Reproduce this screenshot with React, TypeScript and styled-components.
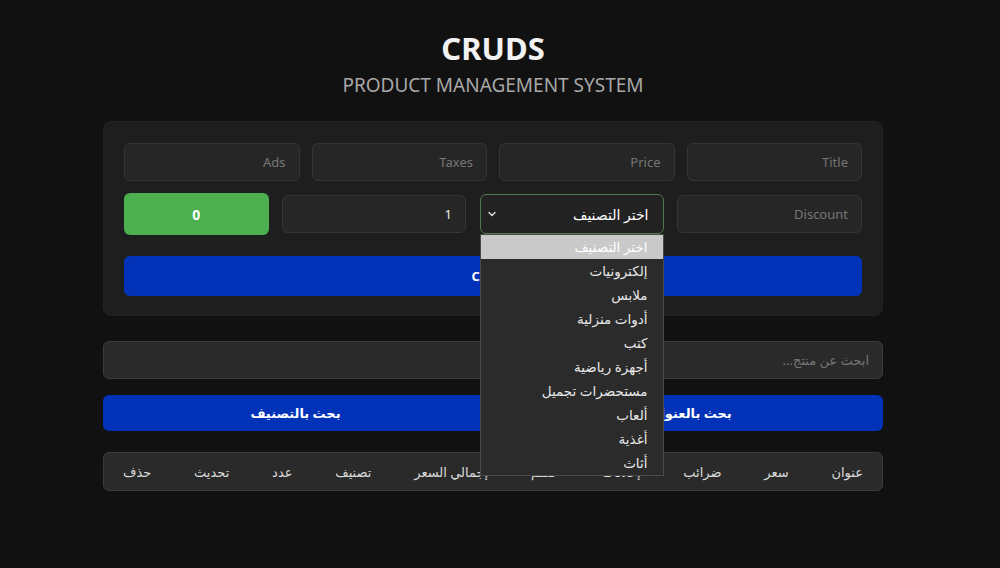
import React from 'react';
import styled, { createGlobalStyle } from 'styled-components';

const GlobalStyle = createGlobalStyle`
  html, body {
    margin: 0;
    padding: 0;
    background: #111111;
  }
  body {
    font-family: 'Noto Sans', 'DejaVu Sans', sans-serif;
    color: #eeeeee;
  }
`;

const Page = styled.div`
  padding: 30px 14px 40px 0;
  min-height: 568px;
  box-sizing: border-box;
`;

const Main = styled.div`
  width: 780px;
  margin: 0 auto;
`;

const Header = styled.header`
  text-align: center;
  margin-bottom: 23px;
`;

const Title = styled.h1`
  margin: 0;
  font-size: 31px;
  font-weight: 700;
  line-height: 36px;
  color: #f2f2f2;
`;

const Subtitle = styled.p`
  margin: 6px 0 0;
  font-size: 19px;
  line-height: 26px;
  color: #a8a8a8;
  font-weight: 400;
`;

const Card = styled.div`
  background: #1e1e1e;
  border: 1px solid #222;
  border-radius: 8px;
  padding: 21px 20px 19px;
  display: flex;
  flex-direction: column;
  gap: 12px;
`;

const Row = styled.div<{ $cols: string; $gap: number }>`
  display: grid;
  direction: rtl;
  grid-template-columns: ${(p) => p.$cols};
  gap: ${(p) => p.$gap}px;
  align-items: center;
`;

const Input = styled.input`
  box-sizing: border-box;
  height: 38px;
  width: 100%;
  background: #262626;
  border: 1px solid #353535;
  border-radius: 6px;
  padding: 0 13px;
  color: #eee;
  font-family: inherit;
  font-size: 13px;
  text-align: right;
  direction: ltr;
  outline: none;

  &::placeholder {
    color: #767676;
  }
`;

const Total = styled.div`
  height: 42px;
  border-radius: 6px;
  background: #4caf50;
  color: #fff;
  font-weight: 700;
  font-size: 14px;
  display: flex;
  align-items: center;
  justify-content: center;
`;

const SelectWrap = styled.div`
  position: relative;
`;

const SelectBox = styled.div`
  box-sizing: border-box;
  height: 40px;
  background: #222;
  border: 1px solid #4d7a4f;
  border-radius: 6px;
  display: flex;
  align-items: center;
  justify-content: space-between;
  padding: 0 14px 0 6px;
  font-size: 14px;
  font-weight: 400;
  color: #ffffff;
`;

const Options = styled.ul`
  position: absolute;
  top: 40px;
  left: 0;
  right: 0;
  margin: 0;
  padding: 0;
  list-style: none;
  background: #2b2b2b;
  border: 1px solid #4a4a4a;
  z-index: 10;
`;

const Option = styled.li<{ $active?: boolean }>`
  height: 24px;
  line-height: 24px;
  padding-right: 15px;
  font-size: 13.5px;
  color: ${(p) => (p.$active ? '#fff' : '#e8e8e8')};
  background: ${(p) => (p.$active ? '#c9c9c9' : 'transparent')};
`;

const BlueButton = styled.button`
  appearance: none;
  border: none;
  background: #0132b8;
  color: #fff;
  font-family: inherit;
  font-weight: 700;
  font-size: 13px;
  border-radius: 6px;
  width: 100%;
`;

const CreateButton = styled(BlueButton)`
  height: 40px;
  margin-top: 9px;
`;

const Search = styled(Input)`
  margin-top: 25px;
  height: 38px;
  background: #2a2a2a;
  border-color: #3b3b3b;
  direction: rtl;
  padding: 0 13px;
`;

const SearchButtons = styled.div`
  display: grid;
  grid-template-columns: 1fr 1fr;
  gap: 10px;
  margin-top: 16px;
  direction: rtl;

  & > button {
    height: 36px;
  }
`;

const Table = styled.div`
  margin-top: 21px;
  box-sizing: border-box;
  height: 39px;
  background: #2a2a2a;
  border: 1px solid #3a3a3a;
  border-radius: 6px;
  display: flex;
  direction: rtl;
  align-items: center;
  justify-content: space-between;
  padding: 0 19px;
`;

const Th = styled.span`
  font-size: 13px;
  color: #dcdcdc;
  white-space: nowrap;
`;

const categories = [
  'اختر التصنيف',
  'إلكترونيات',
  'ملابس',
  'أدوات منزلية',
  'كتب',
  'أجهزة رياضية',
  'مستحضرات تجميل',
  'ألعاب',
  'أغذية',
  'أثاث',
];

const columns = [
  'عنوان',
  'سعر',
  'ضرائب',
  'إعلانات',
  'خصم',
  'إجمالي السعر',
  'تصنيف',
  'عدد',
  'تحديث',
  'حذف',
];

const Chevron = () => (
  <svg width="10" height="10" viewBox="0 0 10 10" fill="none">
    <path d="M2 3.5 5 6.5 8 3.5" stroke="#e0e0e0" strokeWidth="1.4" strokeLinecap="round" strokeLinejoin="round" />
  </svg>
);

const App = () => {
  return (
    <Page>
      <GlobalStyle />
      <Main>
        <Header>
          <Title>CRUDS</Title>
          <Subtitle>PRODUCT MANAGEMENT SYSTEM</Subtitle>
        </Header>

        <Card>
          <Row $cols="1fr 1fr 1fr 1fr" $gap={12}>
            <Input placeholder="Title" />
            <Input placeholder="Price" />
            <Input placeholder="Taxes" />
            <Input placeholder="Ads" />
          </Row>
          <Row $cols="185px 184px 184px 1fr" $gap={13.5}>
            <Input placeholder="Discount" />
            <SelectWrap>
              <SelectBox>
                <span>اختر التصنيف</span>
                <Chevron />
              </SelectBox>
              <Options>
                {categories.map((c, i) => (
                  <Option key={c} $active={i === 0}>
                    {c}
                  </Option>
                ))}
              </Options>
            </SelectWrap>
            <Input defaultValue="1" />
            <Total>0</Total>
          </Row>
          <CreateButton>Create</CreateButton>
        </Card>

        <Search placeholder="ابحث عن منتج..." />
        <SearchButtons>
          <BlueButton>بحث بالعنوان</BlueButton>
          <BlueButton>بحث بالتصنيف</BlueButton>
        </SearchButtons>

        <Table>
          {columns.map((c) => (
            <Th key={c}>{c}</Th>
          ))}
        </Table>
      </Main>
    </Page>
  );
};

export default App;
